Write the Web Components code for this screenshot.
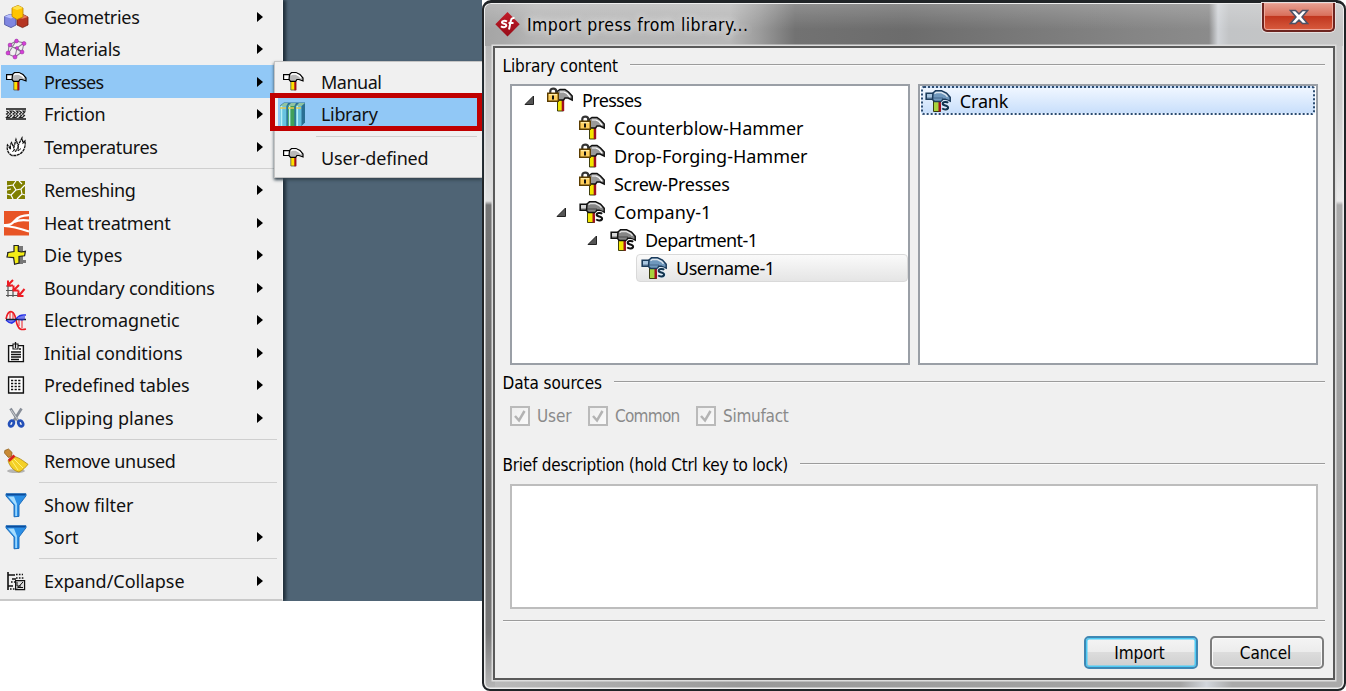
<!DOCTYPE html>
<html lang="en">
<head>
<meta charset="utf-8">
<title>Import press from library</title>
<style>
html,body{margin:0;padding:0;background:#fff}
body{width:1346px;height:691px;overflow:hidden;font-family:"Noto Sans","Open Sans",sans-serif;font-size:18px;color:#111}
</style>
</head>
<body>
<app-screen></app-screen>
<script>
const hammer = (light, metal, edge, y, extra) => `
<path d="M8.500 12h7v10.500h-7z" fill="${y}" stroke="#2a2a00" stroke-width=".9"/><path d="M13.500 12h2.500v10.500h-2.500z" fill="#a01020"/>
<path d="M1.200 4.200h8v6h-8z" fill="${light}" stroke="${edge}" stroke-width="1.600"/>
<path d="M8 4l2.500-2.300h6l5 2.300 3.700 4.300v3.800l-5-1.800h-2.500l-1.200 2.200H9.500L7.500 10.500z" fill="${metal}" stroke="${edge}" stroke-width="1.500"/>
<path d="M9.500 4.700l2-1.200h5l4 2 2 2.300" stroke="#fff" stroke-width="1.400" fill="none" opacity=".75"/>
<path d="M2 9h16" stroke="${edge}" stroke-width="1.500" opacity=".35" fill="none"/>${extra || ''}`;
const sMark = (c, halo) => `<path d="M23.2 13.800c-1.200-1.100-5.400-1.200-5.500 1s5.300 1.300 5.400 3.700-4.400 2.400-5.900.9" stroke="${halo}" stroke-width="3.8" fill="none"/><path d="M23.2 13.800c-1.200-1.100-5.400-1.200-5.500 1s5.300 1.300 5.400 3.700-4.400 2.400-5.900.9" stroke="${c}" stroke-width="2" fill="none"/>`;
const funnel = `<path d="M2 .8h20v2L15 12v11.4l-5 .4V12L2 3z" fill="#2b8fe6" stroke="#1465b5" stroke-width=".9"/><path d="M4 3.4L11.3 12v11h1.6V11L10 3.4z" fill="#a6ddff"/><path d="M2 .8h20l-1 1.8H3z" fill="#0c4d9c"/>`;
const ICONS = {
 geo:`<path d="M.6 11.500l5.500-2.200L12 11.500v8.500l-5 2.600-6.400-3z" fill="#7f86e0" stroke="#434a9a" stroke-width=".8"/><path d="M.6 11.500l5.500-2.200L12 11.500l-5 2z" fill="#b9c0ff"/>
 <path d="M13 12l6-2.500 5 2.500v8l-5.500 2.600-5.500-2.600z" fill="#b53522" stroke="#701c10" stroke-width=".8"/><path d="M13 12l6-2.500 5 2.500-5.500 1.800z" fill="#e87a5c"/><path d="M8 3l6-2.600L19 3v9l-6 2.500-5-3z" fill="#ffc400" stroke="#b98000" stroke-width=".8"/><path d="M8 3l6-2.600L19 3l-6 2z" fill="#ffe14a"/>`,
 mat:`<g stroke="#8a7f92" fill="none" stroke-width="1.100"><path d="M5 8l7-4 8 2-2 9-7 5-7-3zM5 8l8 3 7-5M13 11l-2 9M5 8l13 7M12 4l-8 13M13 11l5 4"/></g><g fill="#d63fd8" stroke="#8f2a96" stroke-width=".5"><circle cx="6" cy="8" r="1.900"/><circle cx="12.500" cy="4" r="1.900"/><circle cx="20" cy="6.500" r="2"/><circle cx="18" cy="15" r="2"/><circle cx="11" cy="20" r="2"/><circle cx="4" cy="16" r="2"/><circle cx="13" cy="11" r="1.500"/></g>`,
 hammer:`<path d="M9.800 11.500h5v8.500h-5z" fill="#ffe000" stroke="#554" stroke-width=".8"/><path d="M13.300 11.500h2v8.800h-2z" fill="#a80c18"/>
 <path d="M2.600 4.700h6.500v4.800H2.600z" fill="#fff" stroke="#000" stroke-width="1.200"/>
 <path d="M8.500 4.500l2-2h4.500l4 2 3 3.500v3l-4-1.500h-2.100l-1.200 1.800H9.500L8 9.500z" fill="#b8b8b8" stroke="#000" stroke-width="1.200"/><path d="M10 5l1.500-1h3.500l3.500 2 1.500 2" stroke="#fff" stroke-width="1.500" fill="none"/>`,
 friction:`<path d="M2 7h20M2 17h20" stroke="#111" stroke-width="1.700"/><path d="M2.500 9l2 1.500L2.500 12l2 1.500-2 2h3l2-2-2-1.500 2-1.500L6 9h3l2 1.500L9 12l2 1.500-2 2h3l2-2-2-1.500 2-1.500L12.500 9h3l2 1.500-2 1.500 2 1.500-2 2h3l2-2-2-1.500 2-1.500L19 9h3" stroke="#222" fill="none" stroke-width="1.150"/>`,
 temp:`<path d="M8 20.500c-4-2-5.500-6-4.500-10.500l3 4c-.5-3 0-5 1-6.500l2.300 5L12 4.500l2 6L18 3l1 5 2-2c.7 5-.5 9.500-5 13l-4 1.500z" fill="#fff" stroke="#111" stroke-width="1.300" stroke-dasharray="3 .6"/><path d="M8.500 17l2-3 1 3 3-6-.5 5 3-2.500" fill="none" stroke="#222"/>`,
 remesh:`<path d="M3 3h18v18H3z" fill="#7f7f00"/><path d="M3 8l6-1 3-4M9 7l3 5-5 5-4-1M7 17l2 4M12 12l5-1 4-4M17 11l1 5-5 5M18 16l3 1M15 3l3 3M3 12l4-1" stroke="#fff" stroke-width="1.200" fill="none"/>`,
 heat:`<path d="M0 0h25v24.500H0z" fill="#e85425"/><path d="M0 14c6 .2 8-1 11-4.500 3-3.500 6-5 14-5.300M10 11c4-2.200 8-2.300 15-1.500M0 15c8 .3 16 2.500 25 5.500" stroke="#fff" stroke-width="2.200" fill="none"/>`,
 die:`<path d="M3 9h18v4H3zM13 3h6v18h-5zM15 17h7v3h-6z" fill="#777"/><path d="M10 2.500h4.300v5.800l2.900.7 4.200-.7-.8 4.500-5.600.7v6.500l-4.400 1.300-1-6.700L3 14l1-4.500 6-1z" fill="#f4ed16" stroke="#222" stroke-width="1.200"/>`,
 bound:`<path d="M4 8v13M9 13v8M14 17v4M2 19.500h17M2 14.500h10M2 10h5" stroke="#555" stroke-width="1.200"/><g stroke="#ed1c24" stroke-width="2" fill="none"><path d="M9 4L4 9M4 4.500v5h5M15 9l-5 5M9.500 9.500v5h5M20.500 13l-5 6M14.500 14.500v5.500h5"/></g>`,
 electro:`<path d="M2 11c2-10 8-10 10 1s6 10 10 9" stroke="#ec1c24" stroke-width="1.600" fill="none"/><path d="M6 4v8M9 4v8M15 11v7M18 11v9" stroke="#ec1c24"/><path d="M2 12c5 5 8 3 11-2 3-4 6-3 9-3" stroke="#2430e8" stroke-width="1.500" fill="none"/><path d="M2 11.500h20" stroke="#123" stroke-width="1.500"/><path d="M3 12h8l-3 4zM13 11l3-3h5v3l-3 2z" fill="#2430e8" opacity=".6"/>`,
 initial:`<path d="M4.600 4.600h14.800v16H4.600z" fill="#fff" stroke="#111" stroke-width="1.400"/><path d="M9 3h5v5H9z" fill="#fff" stroke="#111" stroke-width="1.100"/><path d="M11.500 1v6M7 11h10M7 13.500h10M7 16h10M7 18.500h8M15 8h2" stroke="#111" stroke-width="1.300"/>`,
 tables:`<path d="M4.600 4h14.800v16H4.600z" fill="#fff" stroke="#111" stroke-width="1.400"/><path d="M7 7.500h10.500M7 10.500h10.500M7 13.500h10.500M7 16.500h10.500" stroke="#111" stroke-width="1.500" stroke-dasharray="2.200 1.400"/>`,
 clip:`<path d="M6.500 2.500l8 13M17.500 2.500L9 16" stroke="#888e98" stroke-width="2.700"/><path d="M7 4l7 10" stroke="#ddd" stroke-width=".8"/><g fill="none" stroke="#2450b8" stroke-width="2.700"><ellipse cx="7.400" cy="17.500" rx="2.200" ry="3" transform="rotate(25 7.400 17.500)"/><ellipse cx="16.700" cy="17.500" rx="2.200" ry="3" transform="rotate(-25 16.700 17.500)"/></g>`,
 broom:`<ellipse cx="12" cy="22" rx="9" ry="2" fill="#000" opacity=".25"/><path d="M.8 1.500l3.700-1.500 3.600 3.500-.7 4-3 1L.5 4z" fill="#c98a35" stroke="#90601c" stroke-width=".8"/><path d="M9.500 7.500c5 .5 9 4 14.500 7.800-2.500 3-5 6-9 7.700C9.500 22 5.500 17 4 11.500z" fill="#f4d026" stroke="#ad850d" stroke-width=".8"/><path d="M8 12l6 9M10 10l9 9" stroke="#fff27a"/><path d="M4 10.500l5.500-5 2 2-6 5.500z" fill="#d7231d"/>`,
 funnel,
 expand:`<path d="M4 3v18M4 6h7M4 17h5M8 10h4" stroke="#111" stroke-width="1.600"/><path d="M12 5.500h7M12 9h8M7 13h4M6 20h5" stroke="#111" stroke-width="1.300" stroke-dasharray="1.600 1.300"/><path d="M11.600 11.600h9v9h-9z" fill="#ddd" stroke="#111" stroke-width="1.200"/><path d="M13 13v4h4M19 13l-6 6.500M14 18.500h5" stroke="#111" fill="none"/>`,
 books:`<path d="M-1 3.500l4-3h21v20l-3.500 3.500H-1z" fill="#2a6f93"/><path d="M-1 4h6.500v20H-1z" fill="#67c3df"/><path d="M7 4h6.500v20H7z" fill="#41a05b"/><path d="M15 4h5.500v20H15z" fill="#63bddd"/><path d="M.5 4v20M8.600 4v20M16.300 4v20" stroke="#b6f0f5" stroke-width="1.500"/><path d="M-1 4l4-3h4L5.500 4zM7 4l3-3h5l-1.500 3zM15 4l3-3h6l-3.500 3z" fill="#8fc3a0"/><path d="M-1 6h6M7 6h6M15 6h5" stroke="#e7c84b" stroke-width="1.600"/><path d="M6.200 3.500V24M14.200 3.500V24" stroke="#2f7f98"/>`,
 lockhammer:`<path d="M10.500 10h6v13h-6z" fill="#f1e500" stroke="#2a2a00" stroke-width=".9"/><path d="M14.700 4h2.500v19h-2.500z" fill="#a01020"/><path d="M10 3.500l3-2h5l3.500 2.500L25.200 8v4L21 10h-3l-1.500 2H10z" fill="#9a9a9a" stroke="#111" stroke-width="1.500"/><path d="M13 4h4l3 1.500 3 3.500" stroke="#fff" stroke-width="1.200" fill="none"/><path d="M3.300 6V3C3.300-.2 9.200-.2 9.200 3v3" stroke="#333" stroke-width="2.200" fill="none"/><path d="M.7 5.200h10.600v8H.7z" fill="#ffcf5d" stroke="#5b3c00" stroke-width="1.400"/><path d="M2 6.700h8" stroke="#fff1b5"/><path d="M6 7.500v4" stroke="#111" stroke-width="2"/>`,
 shammer: hammer('#d8d8d8','#858585','#111','#f1e500', sMark('#111','#fff')),
 bhammer: hammer('#a9c6e0','#6f98bd','#1c3c5c','#a8d23c', sMark('#12344f','#dcebf8')),
 logo:`<defs><linearGradient id="g" x2="0" y2="1"><stop stop-color="#c01c28"/><stop offset="1" stop-color="#980c18"/></linearGradient></defs><path d="M12.500 0l12.200 12.200L12.500 24.500.3 12.200z" fill="url(#g)"/><path d="M12 9.500c-2-1.200-5.300-.8-5 1s4.500.8 4.300 3-3.800 2-5.300.7M14 17.500l2-9.500c.3-1.600 1.800-2.300 3.500-1.800M13.500 11h5" stroke="#fff" stroke-width="2" fill="none"/>`
};
const define = (tag, html, init) => {
  const t = document.createElement('template');
  t.innerHTML = html;
  customElements.define(tag, class extends HTMLElement {
    connectedCallback() {
      if (this.shadowRoot) return;
      this.attachShadow({mode:'open'}).append(t.content.cloneNode(true));
      if (init) init(this, this.shadowRoot);
    }
  });
};

/* an icon from the set above */
define('ui-icon', `<style>:host{display:block;flex:none;width:var(--w,24px);height:24px}svg{display:block;overflow:visible}</style><svg></svg>`, (h, r) => {
  const w = h.getAttribute('w') || 24, s = r.querySelector('svg');
  h.style.setProperty('--w', w + 'px');
  s.setAttribute('width', w); s.setAttribute('height', 24); s.setAttribute('viewBox', `0 0 ${w} 24`);
  s.innerHTML = ICONS[h.getAttribute('name')] || '';
});

/* single-line label whose tracking is adjusted to a given width */
define('fit-text', `<style>:host{display:block;flex:none;white-space:nowrap;line-height:24px}span{display:inline-block}</style><span><slot></slot></span>`, (h, r) => {
  const s = r.querySelector('span'), w = +h.getAttribute('w') + .5;
  if (!h.textContent) return;
  h.style.width = w + 'px';
  s.style.letterSpacing = (w - s.getBoundingClientRect().width) / h.textContent.length + 'px';
});

define('menu-item', `<style>
:host{display:flex;align-items:center;height:32.5px;box-sizing:border-box;padding-left:3px}
:host([active]){background:#91c8f6}
fit-text{margin-left:16px}
i{margin-left:auto;margin-right:14px;border-left:6px solid #000;border-top:5px solid transparent;border-bottom:5px solid transparent}
:host([leaf]) i{display:none}
</style><ui-icon></ui-icon><fit-text></fit-text><i></i>`);

define('menu-rule', `<style>:host{display:flex;height:11px;align-items:center;padding-left:38px}hr{flex:1;border:0;height:1px;margin:0;background:#cfcfcf}</style><hr>`);

define('tree-row', `<style>
:host{display:flex;align-items:center;height:28px;box-sizing:border-box}
svg{flex:none;margin-right:12px}
:host(:not([open])) svg{visibility:hidden}
.b{display:flex;align-items:center;height:28px;box-sizing:border-box;flex:1;border:1px solid transparent;border-radius:4px;padding-left:4px;margin-left:-5px}
:host([selected]) .b{border-color:#d9d9d9;background:linear-gradient(#fafafa,#e5e5e5)}
fit-text{margin-left:9px}
</style><svg width="11" height="10"><path d="M1 9.500L9.500 1v8.500z" fill="#555" stroke="#222"/></svg><div class="b"><ui-icon w="26"></ui-icon><fit-text></fit-text></div>`);

define('group-title', `<style>:host{display:flex;align-items:center;height:36px;gap:12px;font-family:var(--tahoma);font-size:17px}hr{flex:1;height:1px;margin:0;border:0;background:#9c9c9c;border-bottom:1px solid #fafafa;position:relative;top:-1px}</style><slot></slot><hr>`);

define('check-option', `<style>:host{display:flex;align-items:center;gap:7px;color:#8a8a8a;font-family:var(--tahoma);font-size:17px}b{width:20px;height:20px;box-sizing:border-box;border:2px solid #bababa;background:linear-gradient(135deg,#eee,#fafafa);display:block}svg{display:block}</style><b><svg width="16" height="16"><path d="M3 8l4 4.500L12.500 3" fill="none" stroke="#b3b3b3" stroke-width="2.500"/></svg></b><slot></slot>`);

define('push-button', `<style>:host{display:flex;align-items:center;justify-content:center;box-sizing:border-box;width:114px;height:33px;border:2px solid #7c7c7c;border-radius:5px;background:linear-gradient(#f4f4f4,#ececec 48%,#dcdcdc 50%,#cfcfcf);box-shadow:inset 0 0 0 1px #fafafa;font-family:var(--tahoma);font-size:17px}
:host([primary]){border-color:#3f87b3;box-shadow:inset 0 0 0 1.500px #4ecbf5}
::slotted(fit-text){margin-left:-3px}</style><slot></slot>`);

define('context-menu', `<style>
:host{display:block;width:283px;height:601px;box-sizing:border-box;background:#f0f0f0;border-right:1px solid #f8f8f8;border-bottom:2px solid #c9c9c9;padding:.45px 5px 0 1px;box-shadow:3px 0 3px #202f3b}
</style><slot></slot>`);

define('sub-menu', `<style>
:host{display:block;box-sizing:border-box;width:208px;height:117px;background:#f0f0f0;border:1px solid #c4c4c4;border-right:0;padding:3.500px 5px 0 3px;box-shadow:0 2px 3px #34444f}
</style><slot></slot>`);

define('press-dialog', `<style>
:host{--tahoma:"DejaVu Sans Condensed","DejaVu Sans",sans-serif;color:#000;display:flex;flex-direction:column;box-sizing:border-box;width:864px;height:691px;border:2px solid #202427;border-top-width:3px;border-radius:9px 9px 8px 8px;
background:linear-gradient(#aaa 0,#b8b8b8 50px,#e2e2e2 198px,#757575 202px,#666 500px,#777 630px,#b5b5b5 684px) left/11px 100% no-repeat,linear-gradient(#c8c8c8,#ccc 100px,#e9e9e9 198px,#aaa 202px,#9b9b9b 500px,#aaa 684px) right/11px 100% no-repeat,linear-gradient(90deg,#bbb,#999 30%,#a4a4a4 81%,#d2d6dc 84%,#aaa 87%);
box-shadow:inset 0 0 0 1.500px #eee}
header{display:flex;box-sizing:border-box;height:42px;margin:1px 1px 0;padding-left:10px;background:linear-gradient(#fff3,#fff0 60%),linear-gradient(90deg,#a5a5a5 0,#a9a9a9 20px,#b6b6b6 50px,#b8b8b8 245px,#9b9b9b 275px,#727272 310px,#6c6c6c 420px,#858585 650px,#8b8b8b 724px,#d1d4d8 733px,#c2c4c6 744px,#c6c6c6 100%);border-radius:6px 6px 0 0}
header ui-icon{margin-top:8px}
header fit-text{margin:8.500px 0 0 7px;font-family:var(--tahoma);font-size:17.500px;text-shadow:0 0 7px #eee,0 0 9px #ddd}
.x{margin-left:auto;margin-right:8px;margin-top:-1px;width:73px;height:29px;box-sizing:border-box;border:2px solid #6d241f;border-top:0;border-radius:0 0 5px 5px;box-shadow:0 0 0 1px #e5dede,inset 0 0 0 1px #eea99c;background:linear-gradient(#e7a193,#d9715d 46%,#c1371f 50%,#d75b3e);display:flex;align-items:center;justify-content:center}
main{flex:1;margin:0 9px 9px;border:2px solid #5a5a5a;box-shadow:0 0 0 1.500px #ddd;background:#f0f0f0;padding:0 8px 0 7.500px;display:flex;flex-direction:column}
.lists{display:grid;grid-template-columns:1fr 1fr;gap:8px;height:281px;padding:0 7.500px;flex:none}
.box{min-width:0;box-sizing:border-box;border:2px solid #9a9fa6;background:#fff}
.tree tree-row{padding-left:12px}.tree .l1{padding-left:44px}.tree .l2{padding-left:75px}.tree .l3{padding-left:106px}
.list{padding:0 1px 1px 1px}
.pick{height:29px;box-sizing:border-box;border:2px dotted #2d4d72;border-radius:3px;background:linear-gradient(#eff6ff,#c9dffb);display:flex;align-items:center;padding-left:2px;gap:9px}
.opts{height:29px;display:flex;gap:16.500px;padding-left:7.500px;align-items:center;margin-bottom:17px}
.desc{height:125px;margin:1px 7.500px 11px;border:2px solid #bdbdbd;background:#fff;box-sizing:border-box;flex:none}
.rule{height:1px;margin:0;border:0;background:#9c9c9c;border-bottom:1px solid #fafafa;flex:none}
footer{display:flex;justify-content:flex-end;gap:12px;padding:14px 1px 0 0}
</style>
<header><ui-icon name="logo" w="25"></ui-icon><fit-text w="221">Import press from library...</fit-text><div class="x"><svg width="20" height="16"><path d="M1.500 1.500h5L10 5l3.500-3.500h5L13 8l5.500 6.500h-5L10 11l-3.500 3.500h-5L7 8z" fill="#fff" stroke="#4b5266" stroke-width="1.500"/></svg></div></header>
<main>
<group-title><fit-text w="115">Library content</fit-text></group-title>
<div class="lists"><div class="box tree">
<tree-row open icon="lockhammer" w="59">Presses</tree-row>
<tree-row class="l1" icon="lockhammer" w="189">Counterblow-Hammer</tree-row>
<tree-row class="l1" icon="lockhammer" w="193">Drop-Forging-Hammer</tree-row>
<tree-row class="l1" icon="lockhammer" w="115">Screw-Presses</tree-row>
<tree-row class="l1" open icon="shammer" w="97">Company-1</tree-row>
<tree-row class="l2" open icon="shammer" w="112">Department-1</tree-row>
<tree-row class="l3" selected icon="bhammer" w="98">Username-1</tree-row>
</div><div class="box list"><div class="pick"><ui-icon name="bhammer" w="26"></ui-icon><fit-text w="48">Crank</fit-text></div></div></div>
<group-title><fit-text w="99">Data sources</fit-text></group-title>
<div class="opts"><check-option><fit-text w="34">User</fit-text></check-option><check-option><fit-text w="64">Common</fit-text></check-option><check-option><fit-text w="65">Simufact</fit-text></check-option></div>
<group-title><fit-text w="285">Brief description (hold Ctrl key to lock)</fit-text></group-title>
<div class="desc"></div><hr class="rule">
<footer><push-button primary><fit-text w="50">Import</fit-text></push-button><push-button><fit-text w="51">Cancel</fit-text></push-button></footer>
</main>`);

/* menu and tree rows carry their label as text; it is wrapped in a fit-text */
const fillRows = root => root.querySelectorAll('menu-item,tree-row').forEach(e => {
  const r = e.shadowRoot, f = document.createElement('fit-text');
  f.setAttribute('w', e.getAttribute('w')); f.textContent = e.textContent;
  r.querySelector('fit-text').replaceWith(f);
  const i = document.createElement('ui-icon');
  i.setAttribute('name', e.getAttribute('icon'));
  if (e.localName === 'tree-row') i.setAttribute('w', 26);
  r.querySelector('ui-icon').replaceWith(i);
  e.textContent = '';
});

define('app-screen', `<style>
:host{display:grid;grid-template-columns:482px 864px;width:1346px;height:691px;position:relative}
.desk{height:601px;background:#4f6475;overflow:hidden}
sub-menu{position:absolute;left:274px;top:61px}
.mark{position:absolute;left:270px;top:93px;width:212px;height:38px;box-sizing:border-box;border:5px solid #c00000}
</style>
<div class="desk"><context-menu>
<menu-item icon="geo" w="95">Geometries</menu-item>
<menu-item icon="mat" w="76">Materials</menu-item>
<menu-item icon="hammer" w="59" active>Presses</menu-item>
<menu-item icon="friction" w="61">Friction</menu-item>
<menu-item icon="temp" w="113">Temperatures</menu-item>
<menu-rule></menu-rule>
<menu-item icon="remesh" w="91">Remeshing</menu-item>
<menu-item icon="heat" w="126">Heat treatment</menu-item>
<menu-item icon="die" w="78">Die types</menu-item>
<menu-item icon="bound" w="170">Boundary conditions</menu-item>
<menu-item icon="electro" w="135">Electromagnetic</menu-item>
<menu-item icon="initial" w="138">Initial conditions</menu-item>
<menu-item icon="tables" w="145">Predefined tables</menu-item>
<menu-item icon="clip" w="129">Clipping planes</menu-item>
<menu-rule></menu-rule>
<menu-item icon="broom" w="131" leaf>Remove unused</menu-item>
<menu-rule></menu-rule>
<menu-item icon="funnel" w="89" leaf>Show filter</menu-item>
<menu-item icon="funnel" w="34">Sort</menu-item>
<menu-rule></menu-rule>
<menu-item icon="expand" w="140">Expand/Collapse</menu-item>
</context-menu></div>
<press-dialog></press-dialog>
<sub-menu>
<menu-item icon="hammer" w="60" leaf>Manual</menu-item>
<menu-item icon="books" w="56" leaf active>Library</menu-item>
<menu-rule></menu-rule>
<menu-item icon="hammer" w="107" leaf>User-defined</menu-item>
</sub-menu><div class="mark"></div>`, (h, r) => {
  fillRows(r);
  fillRows(r.querySelector('press-dialog').shadowRoot);
});
</script>
</body>
</html>
